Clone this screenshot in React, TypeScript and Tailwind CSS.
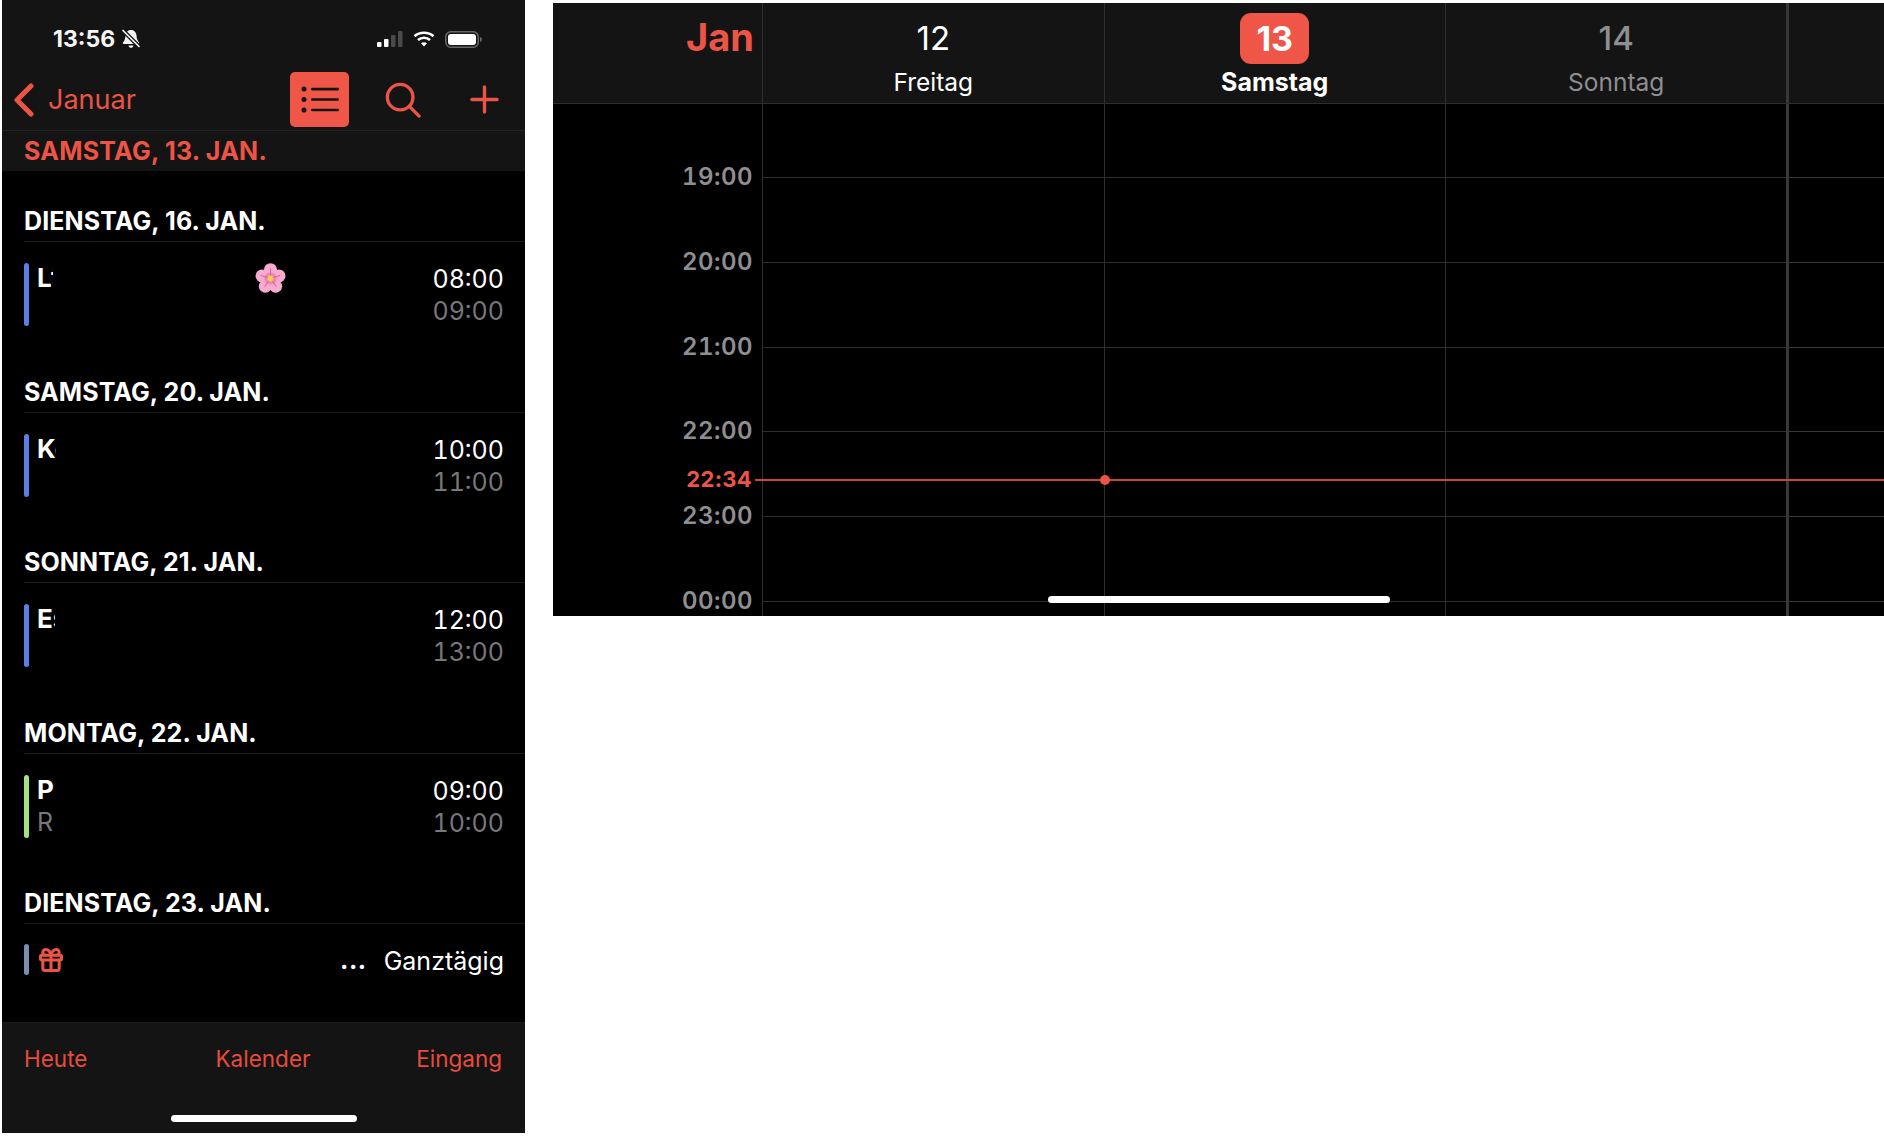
import { Gift } from "lucide-react";

const font = { fontFamily: '"Inter", "Noto Sans", sans-serif' };

const sections = [
  { date: "DIENSTAG, 16. JAN.", title: "Lt", clip: "w-[16px]", start: "08:00", end: "09:00", color: "bg-[#5a7fe6]", flower: true },
  { date: "SAMSTAG, 20. JAN.", title: "Ke", clip: "w-[19px]", start: "10:00", end: "11:00", color: "bg-[#5a7fe6]" },
  { date: "SONNTAG, 21. JAN.", title: "Es", clip: "w-[18px]", start: "12:00", end: "13:00", color: "bg-[#5a7fe6]" },
  { date: "MONTAG, 22. JAN.", title: "Pr", sub: "Re", clip: "w-[17px]", start: "09:00", end: "10:00", color: "bg-[#a3e27f]" },
];

const hours = [
  { label: "19:00", height: "h-[74px]" },
  { label: "20:00", height: "h-[84.75px]" },
  { label: "21:00", height: "h-[84.75px]" },
  { label: "22:00", height: "h-[84.75px]" },
  { label: "23:00", height: "h-[84.75px]" },
  { label: "00:00", height: "h-[84.75px]" },
];

const StatusIcons = () => (
  <div className="flex items-center ml-auto mr-[43px]">
    {/* signal */}
    <svg width="26" height="16" viewBox="0 0 26 16" className="mr-[10px]">
      <rect x="0" y="11" width="4.5" height="5" rx="1" fill="#fff" />
      <rect x="7" y="8" width="4.5" height="8" rx="1" fill="#fff" />
      <rect x="14" y="4" width="4.5" height="12" rx="1" fill="#4a4a4c" />
      <rect x="21" y="0" width="4.5" height="16" rx="1" fill="#4a4a4c" />
    </svg>
    {/* wifi */}
    <svg width="22" height="16" viewBox="0 0 22 16" fill="none" stroke="#fff" strokeWidth="2.6" className="mr-[10px]">
      <path d="M1.5 5.2C6.8 .6 15.2 .6 20.5 5.2" />
      <path d="M5 9c3.4-3 8.6-3 12 0" />
      <path d="M11 15.5l-3-3.3c1.7-1.3 4.3-1.3 6 0z" fill="#fff" stroke="none" />
    </svg>
    {/* battery */}
    <svg width="37" height="17" viewBox="0 0 37 17">
      <rect x=".75" y=".75" width="32.5" height="15.5" rx="5" fill="none" stroke="#67676a" strokeWidth="1.5" />
      <rect x="3" y="3" width="28" height="11" rx="3" fill="#fff" />
      <path d="M35 6v5c1.2-.4 2-1.4 2-2.500s-.8-2.100-2-2.500z" fill="#67676a" />
    </svg>
  </div>
);

const BellSlash = () => (
  <svg width="20" height="20" viewBox="0 0 20 20" className="ml-[6px]">
    <path d="M10 1c-3.400 0-5.300 2.600-5.500 5.600-.2 3.200-.7 4.800-2.500 6.900-.5.600-.1 1.500.7 1.500h14.600c.8 0 1.200-.9.700-1.500-1.800-2.100-2.300-3.700-2.500-6.900C15.300 3.600 13.400 1 10 1z" fill="#f4f4f4" />
    <path d="M7.500 16.500c.3 1.400 1.300 2.300 2.500 2.300s2.200-.9 2.500-2.300z" fill="#f4f4f4" />
    <path d="M2 1.500l16 16" stroke="#141414" strokeWidth="4" />
    <path d="M2 1.500l16 16" stroke="#f4f4f4" strokeWidth="1.700" strokeLinecap="round" />
  </svg>
);

const Flower = () => (
  <svg width="31" height="31" viewBox="0 0 30 30" className="ml-[202px]">
    <g fill="#f7accf">
      <circle cx="15" cy="6.500" r="6.300" />
      <circle cx="23.200" cy="12.500" r="6.300" />
      <circle cx="20" cy="22.500" r="6.300" />
      <circle cx="10" cy="22.500" r="6.300" />
      <circle cx="6.800" cy="12.500" r="6.300" />
    </g>
    <circle cx="15" cy="15" r="6" fill="#ee86b8" />
    <g stroke="#e2609f" strokeWidth="1" strokeLinecap="round">
      <path d="M15 15V5.500M15 15l9-3M15 15l5.500 7.500M15 15l-5.500 7.500M15 15l-9-3" />
    </g>
    <circle cx="15" cy="15" r="2.800" fill="#f5cf4a" />
  </svg>
);

const ListPane = () => (
  <div className="w-[523px] h-[1133px] ml-[2px] bg-black flex flex-col shrink-0 overflow-hidden">
    {/* status + nav */}
    <div className="bg-[#141414] h-[131px] border-b border-[#222224] flex flex-col">
      <div className="flex items-center h-[20px] mt-[29px] pl-[51px]">
        <span className="text-[23px] font-bold text-[#f6f6f6] leading-none">13:56</span>
        <BellSlash />
        <StatusIcons />
      </div>
      <div className="flex items-center h-[55px] mt-[23px] pr-[26px]">
        <svg width="22" height="34" viewBox="0 0 22 34" fill="none" stroke="#ec5545" strokeWidth="5" strokeLinecap="round" strokeLinejoin="round" className="ml-[11px]">
          <path d="M18 3L4 17l14 14" />
        </svg>
        <span className="text-[27px] text-[#ec5545] ml-[13px] leading-none">Januar</span>
        <div className="ml-auto w-[59px] h-[55px] rounded-[5px] bg-[#ef5647] flex items-center justify-center">
          <svg width="38" height="27" viewBox="0 0 38 27" fill="#141414">
            <circle cx="3" cy="3" r="2.500" />
            <circle cx="3" cy="13.500" r="2.500" />
            <circle cx="3" cy="24" r="2.500" />
            <rect x="10" y="1.800" width="28" height="2.600" rx="1.300" />
            <rect x="10" y="12.200" width="28" height="2.600" rx="1.300" />
            <rect x="10" y="22.700" width="28" height="2.600" rx="1.300" />
          </svg>
        </div>
        <svg width="36" height="36" viewBox="0 0 38 38" fill="none" stroke="#ec5545" strokeWidth="3.500" strokeLinecap="round" className="ml-[36px]">
          <circle cx="16" cy="16" r="13.500" />
          <path d="M26 26l10 10" />
        </svg>
        <svg width="29" height="29" viewBox="0 0 30 30" fill="none" stroke="#ec5545" strokeWidth="3.500" strokeLinecap="round" className="ml-[49px]">
          <path d="M15 2v26M2 15h26" />
        </svg>
      </div>
    </div>
    <div className="bg-[#141414] h-[40px] flex items-center pl-[22px]">
      <span className="text-[25px] font-bold tracking-[0.25px] text-[#ec5545] leading-none">SAMSTAG, 13. JAN.</span>
    </div>

    {/* agenda */}
    <div className="flex-1 pl-[22px] overflow-hidden">
      {sections.map((s) => (
        <div key={s.date} className="h-[170.6px]">
          <div className="pt-[36px] pb-[6px] border-b border-[#1c1c1e]">
            <div className="text-[25px] font-bold tracking-[0.1px] text-white leading-[28px]">{s.date}</div>
          </div>
          <div className="flex items-start pt-[21px] pr-[21px]">
            <div className={`w-[5px] h-[63px] rounded-full ${s.color}`} />
            <div className={`ml-[8px] -mt-[2px] overflow-hidden whitespace-nowrap leading-[33px] ${s.clip}`}>
              <div className="text-[26px] font-bold text-white">{s.title}</div>
              {s.sub && <div className="text-[25px] text-[#77777c]">{s.sub}</div>}
            </div>
            {s.flower && <Flower />}
            <div className="ml-auto text-right text-[25px] leading-[32px] tabular-nums">
              <div className="text-white">{s.start}</div>
              <div className="text-[#77777c]">{s.end}</div>
            </div>
          </div>
        </div>
      ))}
      <div>
        <div className="pt-[36px] pb-[6px] border-b border-[#1c1c1e]">
          <div className="text-[25px] font-bold tracking-[0.1px] text-white leading-[28px]">DIENSTAG, 23. JAN.</div>
        </div>
        <div className="flex items-center pt-[20px] pr-[21px]">
          <div className="w-[5px] h-[31px] rounded-full bg-[#7b8db0]" />
          <Gift size={28} color="#ec5545" strokeWidth={2.6} className="ml-[8px]" />
          <span className="ml-auto mt-[2px] text-[25px] font-bold text-white tracking-[0.5px] leading-none">...</span>
          <span className="ml-[17px] mt-[3px] text-[25px] text-white leading-none">Ganztägig</span>
        </div>
      </div>
    </div>

    {/* tab bar */}
    <div className="bg-[#141414] h-[111px] border-t border-[#1c1c1e] flex flex-col">
      <div className="grid grid-cols-3 items-center pl-[22px] pr-[23px] mt-[22px] text-[22.5px] text-[#e64c3f] leading-[28px]">
        <span>Heute</span>
        <span className="text-center">Kalender</span>
        <span className="text-right">Eingang</span>
      </div>
      <div className="self-center w-[186px] h-[7px] rounded-full bg-white mt-[42px]" />
    </div>
  </div>
);

const DayHead = ({ day, name, tone }: { day: string; name: string; tone: "normal" | "today" | "muted" }) => (
  <div className="w-[341.5px] shrink-0 border-l border-[#2e2e30] flex flex-col items-center">
    {tone === "today" ? (
      <div className="mt-[10px] w-[69px] h-[51px] rounded-[11px] bg-[#ef5647] flex items-center justify-center text-[34px] font-bold text-white leading-none">
        {day}
      </div>
    ) : (
      <div className={`mt-[10px] h-[51px] flex items-center text-[33px] leading-none ${tone === "muted" ? "font-medium text-[#8e8e93]" : "text-white"}`}>
        {day}
      </div>
    )}
    <div
      className={`mt-[3px] leading-[30px] ${
        tone === "today" ? "text-[25px] font-bold text-white" : tone === "muted" ? "text-[24.5px] text-[#8e8e93]" : "text-[24.5px] text-white"
      }`}
    >
      {name}
    </div>
  </div>
);

const WeekPane = () => (
  <div className="flex-1 h-[613px] ml-[28px] mt-[3px] bg-black flex flex-col overflow-hidden">
    {/* header */}
    <div className="bg-[#141414] h-[101px] border-b border-[#2e2e30] flex shrink-0">
      <div className="w-[209px] shrink-0 pr-[8px] text-right text-[38px] font-bold text-[#ec5545] leading-[54px] pt-[7px]">Jan</div>
      <DayHead day="12" name="Freitag" tone="normal" />
      <DayHead day="13" name="Samstag" tone="today" />
      <DayHead day="14" name="Sonntag" tone="muted" />
      <div className="flex-1 -ml-[1px] border-l-[3px] border-[#38383a]" />
    </div>

    {/* hour grid */}
    <div className="relative flex-1">
      {hours.map((h) => (
        <div key={h.label} className={`flex ${h.height}`}>
          <div className="w-[209px] shrink-0 flex items-end justify-end pr-[9px]">
            <span className="text-[24px] font-semibold tracking-[0.5px] tabular-nums text-[#8e8e93] leading-[28px] translate-y-[13px]">{h.label}</span>
          </div>
          <div className="w-[341.5px] shrink-0 border-l border-b border-[#2e2e30]" />
          <div className="w-[341.5px] shrink-0 border-l border-b border-[#2e2e30]" />
          <div className="w-[341.5px] shrink-0 border-l border-b border-[#2e2e30]" />
          <div className="flex-1 -ml-[1px] border-l-[3px] border-b border-[#38383a]" />
        </div>
      ))}
      <div className="flex h-[16px]">
        <div className="w-[209px] shrink-0" />
        <div className="w-[341.5px] shrink-0 border-l border-[#2e2e30]" />
        <div className="w-[341.5px] shrink-0 border-l border-[#2e2e30]" />
        <div className="w-[341.5px] shrink-0 border-l border-[#2e2e30]" />
        <div className="flex-1 -ml-[1px] border-l-[3px] border-[#38383a]" />
      </div>

      {/* now indicator */}
      <span className="absolute left-0 w-[199px] top-[361px] text-right text-[22px] font-bold tracking-[0.3px] text-[#ec5545] leading-[28px]">22:34</span>
      <div className="absolute left-[202px] right-0 top-[375px] h-[2px] bg-[#c9443a]" />
      <div className="absolute left-[547px] top-[371px] w-[10px] h-[10px] rounded-full bg-[#ec5545]" />

      {/* home indicator */}
      <div className="absolute left-[495px] top-[492px] w-[342px] h-[7px] rounded-full bg-white" />
    </div>
  </div>
);

export default function App() {
  return (
    <div className="w-[1884px] h-[1136px] bg-white flex items-start overflow-hidden" style={font}>
      <ListPane />
      <WeekPane />
    </div>
  );
}
